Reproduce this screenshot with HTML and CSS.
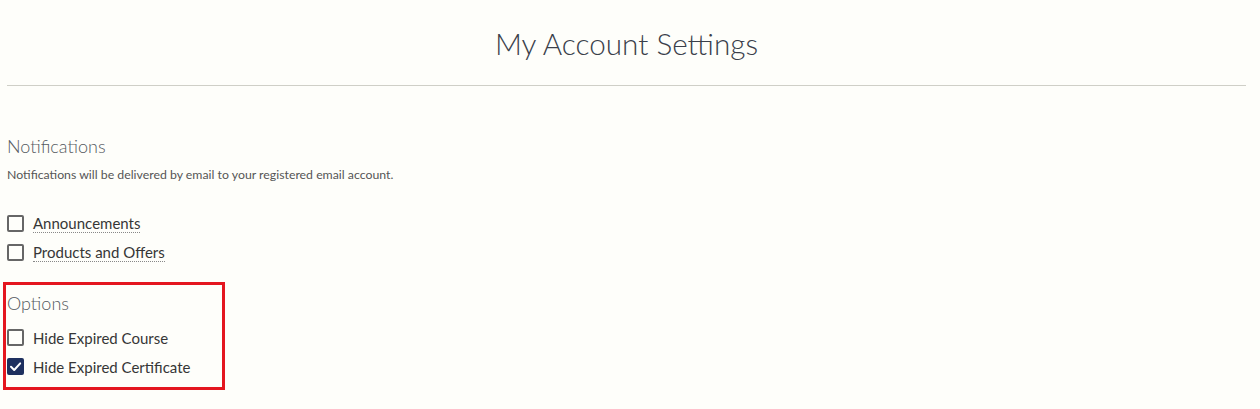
FILE: index.html
```html
<!DOCTYPE html>
<html lang="en">
<head>
<meta charset="utf-8">
<title>My Account Settings</title>
<link rel="stylesheet" href="styles.css">
</head>
<body>
<div class="page">
  <header class="page-header">
    <h1 class="page-title">My Account Settings</h1>
  </header>

  <section class="section notifications">
    <h2 class="section-title">Notifications</h2>
    <p class="section-desc">Notifications will be delivered by email to your registered email account.</p>
    <ul class="check-list">
      <li class="check-row">
        <span class="box"></span>
        <span class="label dotted">Announcements</span>
      </li>
      <li class="check-row">
        <span class="box"></span>
        <span class="label dotted">Products and Offers</span>
      </li>
    </ul>
  </section>

  <section class="section options">
    <h2 class="section-title">Options</h2>
    <ul class="check-list">
      <li class="check-row">
        <span class="box"></span>
        <span class="label">Hide Expired Course</span>
      </li>
      <li class="check-row">
        <span class="box checked">
          <svg viewBox="0 0 17 17" width="17" height="17"><path d="M4 8.8 L7.2 12 L13.2 5.4" fill="none" stroke="#ffffff" stroke-width="2" stroke-linecap="round" stroke-linejoin="round"/></svg>
        </span>
        <span class="label">Hide Expired Certificate</span>
      </li>
    </ul>
  </section>
</div>
</body>
</html>
```

FILE: styles.css
```css
* { box-sizing: border-box; }
html, body {
  margin: 0;
  padding: 0;
  background: #fefefa;
}
body {
  font-family: "Lato", "Open Sans", sans-serif;
  color: #333;
}
.page {
  margin-left: 7px;
  width: 1239px;
}
.page-header {
  border-bottom: 1px solid #cfcfc7;
  height: 86px;
  padding-top: 24px;
}
.page-title {
  margin: 0;
  text-align: center;
  font-weight: 300;
  font-size: 29.7px;
  line-height: 40px;
  color: #3a3f4a;
}
.section-title {
  margin: 0;
  font-weight: 300;
  font-size: 18px;
  line-height: 24px;
  color: #555a60;
}
.notifications {
  padding-top: 48px;
}
.section-desc {
  margin: 9px 0 0;
  font-size: 12.3px;
  line-height: 16px;
  color: #555;
}
.check-list {
  list-style: none;
  margin: 0;
  padding: 0;
}
.notifications .check-list {
  margin-top: 26px;
}
.check-row {
  display: flex;
  align-items: center;
  gap: 9px;
  height: 29px;
  font-size: 15px;
  color: #363636;
}
.box {
  width: 17px;
  height: 17px;
  border: 2px solid #666;
  border-radius: 2px;
  flex: none;
  display: flex;
  align-items: center;
  justify-content: center;
  position: relative;
}
.box.checked {
  background: #1e305f;
  border-color: #1e305f;
}
.box.checked svg {
  position: absolute;
  left: -2px;
  top: -2px;
}
.dotted {
  border-bottom: 1px dotted #888;
  line-height: 17px;
}
.options {
  margin-top: 15px;
  margin-left: -4px;
  width: 222px;
  border: 3px solid #e4161f;
  padding: 6px 0 6px 1px;
}
.options .check-list {
  margin-top: 8px;
}
```
